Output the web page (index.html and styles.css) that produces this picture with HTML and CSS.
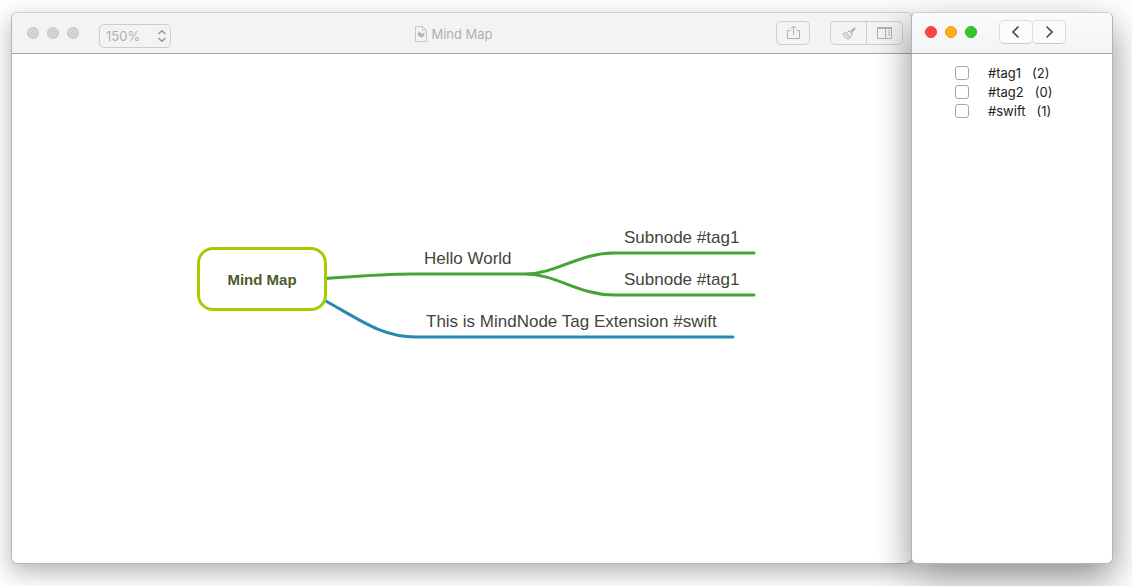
FILE: index.html
```html
<!DOCTYPE html>
<html lang="en">
<head>
<meta charset="utf-8">
<title>Mind Map</title>
<link rel="stylesheet" href="styles.css">
</head>
<body>
<main class="window document">
  <header class="toolbar">
    <div class="toolbar-left">
      <div class="lights inactive"><i></i><i></i><i></i></div>
      <div class="zoom">
        <select aria-label="Zoom level"><option>150%</option></select>
        <svg width="10" height="14" viewBox="0 0 10 14"><path d="M1.5 5 5 1.8 8.500 5M1.500 9 5 12.200 8.500 9"/></svg>
      </div>
    </div>
    <h1 class="title">
      <svg width="12" height="16" viewBox="0 0 12 16"><path class="page" d="M.5.5H7.500L11.500 4.500v11H.5z"/><path class="page" d="M7.500 .5v4h4"/><path class="leaf" d="M6.500 11.500C4 10.800 2.300 9.500 2.500 7l1.500.3-.5-2.300L6 7l1 .8L9.500 6.500c.4 2.500-.6 4.300-3 5z"/></svg>
      <span>Mind Map</span>
    </h1>
    <div class="toolbar-right">
      <button class="tool share" aria-label="Share"><svg width="14" height="16" viewBox="0 0 14 16"><path d="M4.500 5.500h-3v8h12v-8h-3M7.500 10v-9M5 3.500 7.500 1 10 3.500"/></svg></button>
      <div class="tool-group">
        <button class="tool" aria-label="Style"><svg width="16" height="16" viewBox="0 0 16 16"><path class="solid" d="M13 3c.8-.3 1.500.5 1 1.200l-3 3.300-1.500-1.400z"/><path d="M7.500 5.500 11.500 9.500M8 6C6.500 7.500 4.500 8 2.300 8.300c.2 2.700 2 5.200 5.200 5.500C9.500 12.500 10.700 11 11 9M4 10.300l3-1.300M5.500 12l2.700-2M7.300 13.300l1.700-2.500"/></svg></button>
        <button class="tool" aria-label="Inspector"><svg width="16" height="12" viewBox="0 0 16 12"><path d="M.5.5h14v11H.5zM8.500 1v10M.5 1.500h14"/><path class="faint" d="M10.500 3.500h2M11 5.500h2M10.500 7.500h2M12.500 3v6"/></svg></button>
      </div>
    </div>
  </header>
  <section class="canvas">
    <svg class="branches" width="760" height="300" viewBox="0 0 760 300">
      <path class="green" d="M314 224.500C342 222.500 370 220 400 220H513C545 220 566 199 602 199H742M513 220C545 220 566 241 602 241H742"/>
      <path class="blue" d="M313 246.500C348 266 370 283 404 283H721"/>
    </svg>
    <div class="node root">Mind Map</div>
    <div class="node hello">Hello World</div>
    <div class="node sub-a">Subnode #tag1</div>
    <div class="node sub-b">Subnode #tag1</div>
    <div class="node extension">This is MindNode Tag Extension #swift</div>
  </section>
</main>
<aside class="window tags">
  <header class="toolbar">
    <div class="lights"><i class="close"></i><i class="minimize"></i><i class="expand"></i></div>
    <nav class="history">
      <button aria-label="Back"><svg width="8" height="14" viewBox="0 0 8 14"><path d="M6.500 1.500 1 7 6.500 12.500"/></svg></button>
      <button aria-label="Forward"><svg width="8" height="14" viewBox="0 0 8 14"><path d="M1.500 1.500 7 7 1.500 12.500"/></svg></button>
    </nav>
  </header>
  <div class="tag-list">
    <label><input type="checkbox"><span>#tag1</span><span>(2)</span></label>
    <label><input type="checkbox"><span>#tag2</span><span>(0)</span></label>
    <label><input type="checkbox"><span>#swift</span><span>(1)</span></label>
  </div>
</aside>
</body>
</html>
```
FILE: styles.css
```css
* { box-sizing: border-box; }
body {
  margin: 0;
  min-height: 100vh;
  padding: 12px 19px 22px 11px;
  display: flex;
  overflow: hidden;
  background: #fff;
  font-family: Inter, "Liberation Sans", sans-serif;
  font-size: 13px;
}
svg { display: block; fill: none; stroke: currentColor; }
button { margin: 0; padding: 0; font: inherit; }
.window {
  display: flex;
  flex-direction: column;
  border: 1px solid #b4b4b4;
  border-top-color: #cfcfcf;
  border-radius: 6px;
  background: #fff;
}
.document {
  flex: 1;
  min-width: 0;
  box-shadow: 0 8px 24px rgba(0, 0, 0, .3);
}
.tags {
  position: relative;
  width: 202px;
  margin-left: -1px;
  box-shadow: 0 14px 36px rgba(0, 0, 0, .45);
}
.toolbar {
  height: 41px;
  flex: none;
  border-bottom: 1px solid #a6a6a6;
  border-radius: 5px 5px 0 0;
  background: #f3f3f3;
}
.document .toolbar {
  display: grid;
  grid-template-columns: 1fr auto 1fr;
  padding: 0 8px 0 15px;
  color: #b0b0b0;
}
.toolbar-left, .toolbar-right { display: flex; align-items: center; }
.toolbar-right { justify-content: flex-end; gap: 20px; }
.lights { display: flex; gap: 8px; }
.lights i {
  width: 12px;
  height: 12px;
  border: 1px solid #c8c8c8;
  border-radius: 50%;
  background: #d2d2d2;
}
.lights .close { background: #fc4645; border-color: #e73d3c; }
.lights .minimize { background: #fdaf17; border-color: #e69a11; }
.lights .expand { background: #36c52a; border-color: #2bb021; }
.zoom {
  position: relative;
  margin: 6px 0 0 20px;
}
.zoom select {
  display: block;
  width: 72px;
  height: 24px;
  padding: 0 6px;
  border: 1px solid #cdcdcd;
  border-radius: 5px;
  appearance: none;
  background: transparent;
  color: #b0b0b0;
  font: inherit;
}
.zoom svg {
  position: absolute;
  top: 5px;
  right: 4px;
  color: #999;
  stroke-width: 1.5;
  pointer-events: none;
}
.title {
  display: flex;
  align-items: center;
  gap: 4px;
  margin: 2px 22px 0 0;
  font-size: 13px;
  font-weight: 400;
}
.title .page { stroke: #c8c8c8; }
.title .leaf { fill: #b4b4b4; stroke: none; }
.tool {
  display: grid;
  place-items: center;
  width: 36px;
  height: 24px;
  border: 1px solid #cfcfcf;
  border-radius: 5px;
  background: transparent;
  color: #b0b0b0;
}
.tool .solid { fill: currentColor; }
.tool .faint { stroke: #cacaca; }
.share { width: 34px; }
.tool-group { display: flex; }
.tool-group .tool:first-child { width: 37px; border-radius: 5px 0 0 5px; }
.tool-group .tool:last-child { width: 37px; margin-left: -1px; border-radius: 0 5px 5px 0; }
.canvas {
  position: relative;
  flex: 1;
  overflow: hidden;
  border-radius: 0 0 5px 5px;
  color: #44443c;
  font: 17px/22px "Liberation Sans", Arial, sans-serif;
}
.branches { position: absolute; left: 0; top: 0; stroke-width: 3; stroke-linecap: round; }
.green { stroke: #46a336; }
.blue { stroke: #268aaf; }
.node { position: absolute; white-space: nowrap; }
.root {
  left: 185px;
  top: 193px;
  width: 130px;
  height: 64px;
  border: 3px solid #a2ce00;
  border-radius: 16px;
  background: #fff;
  color: #4b5b2c;
  font-size: 15px;
  font-weight: 700;
  line-height: 60px;
  text-align: center;
}
.hello { left: 412px; top: 194px; }
.sub-a { left: 612px; top: 173px; }
.sub-b { left: 612px; top: 215px; }
.extension { left: 414px; top: 257px; }
.tags .toolbar {
  display: flex;
  align-items: center;
  padding: 0 0 2px 13px;
  background: linear-gradient(#fbfbfb, #f4f4f4);
}
.history { display: flex; margin-left: 22px; }
.history button {
  display: grid;
  place-items: center;
  width: 34px;
  height: 24px;
  border: 1px solid #dcdcdc;
  border-bottom-color: #cbcbcb;
  border-radius: 5px;
  background: #fbfbfb;
  color: #4c4c4c;
}
.history button + button { margin-left: -1px; }
.history svg { stroke-width: 1.6; }
.tag-list { padding: 9px 0 0 43px; color: #222; }
.tag-list label { display: flex; align-items: center; height: 19px; }
.tag-list input {
  appearance: none;
  width: 14px;
  height: 14px;
  margin: 0 19px 0 0;
  border: 1px solid #a6a6a6;
  border-radius: 3px;
  background: #fff;
}
.tag-list input:checked { background: #3b82f6; }
.tag-list span + span { margin-left: 11px; }
```
